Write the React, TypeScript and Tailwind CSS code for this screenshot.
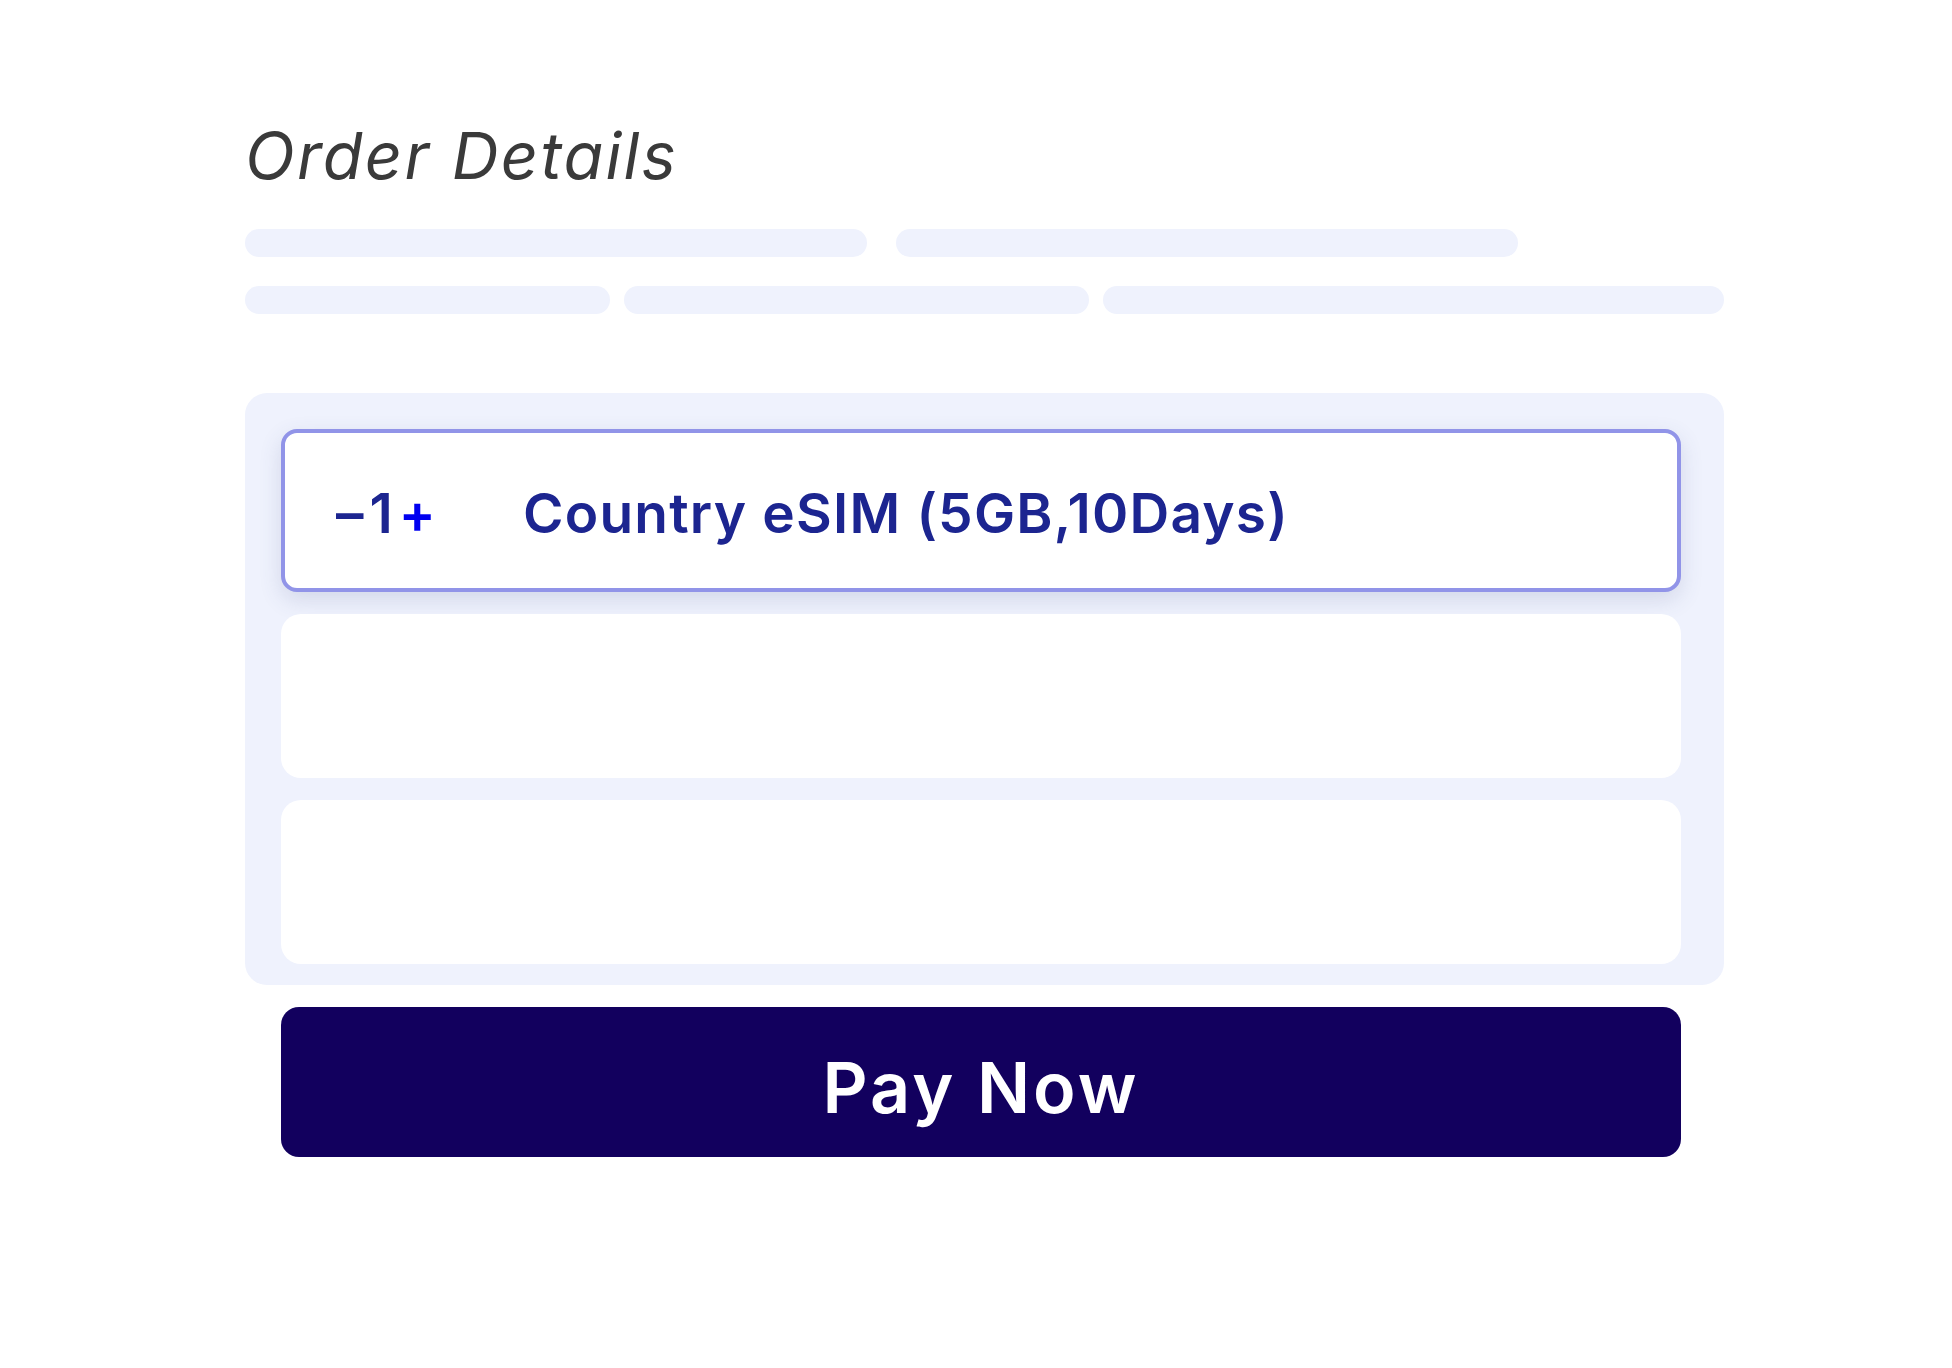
const skeleton = "h-[28px] rounded-full bg-[#eff2fd]";

const Stepper = () => (
  <div className="w-[190px] shrink-0 flex items-center text-[55px] font-semibold leading-none">
    <span className="text-[#1c2590] ml-[3px]">–</span>
    <span className="text-[#1c2590] ml-[6px]">1</span>
    <span className="text-[#0000f0] ml-[6px]">+</span>
  </div>
);

const OrderCard = ({ selected, title }: { selected?: boolean; title?: string }) => {
  if (!selected) {
    return <div className="h-[164px] rounded-[20px] bg-white"></div>;
  }
  return (
    <div className="h-[163px] rounded-[16px] border-4 border-[#9194e8] bg-white shadow-[0_8px_22px_rgba(70,80,130,0.16)] flex items-center pl-[48px] pt-[6px]">
      <Stepper />
      <span className="text-[55px] font-semibold leading-none text-[#1c2590] tracking-[1.2px]">
        {title}
      </span>
    </div>
  );
};

export default function App() {
  return (
    <div className="min-h-screen bg-white font-['Inter',sans-serif]">
      <div className="w-[1479px] ml-[245px] pt-[123px]">
        <h1 className="text-[65px] italic font-normal leading-none text-[#3a3a3a] tracking-[2.25px]">
          Order Details
        </h1>

        <div className="mt-[41px] flex gap-[29px]">
          <div className={`${skeleton} w-[622px]`}></div>
          <div className={`${skeleton} w-[622px]`}></div>
        </div>
        <div className="mt-[29px] flex gap-[14px]">
          <div className={`${skeleton} w-[365px]`}></div>
          <div className={`${skeleton} w-[465px]`}></div>
          <div className={`${skeleton} flex-1`}></div>
        </div>

        <div className="mt-[79px] rounded-[22px] bg-[#eff2fd] pt-[36px] pb-[21px] pl-[36px] pr-[43px] flex flex-col gap-[22px]">
          <OrderCard selected title="Country eSIM (5GB,10Days)" />
          <OrderCard />
          <OrderCard />
        </div>

        <button className="mt-[22px] ml-[36px] w-[1400px] h-[150px] rounded-[18px] bg-[#12005e] flex items-center justify-center pt-[12px] text-white text-[70px] font-semibold leading-none tracking-[3px]">
          Pay Now
        </button>
      </div>
    </div>
  );
}
